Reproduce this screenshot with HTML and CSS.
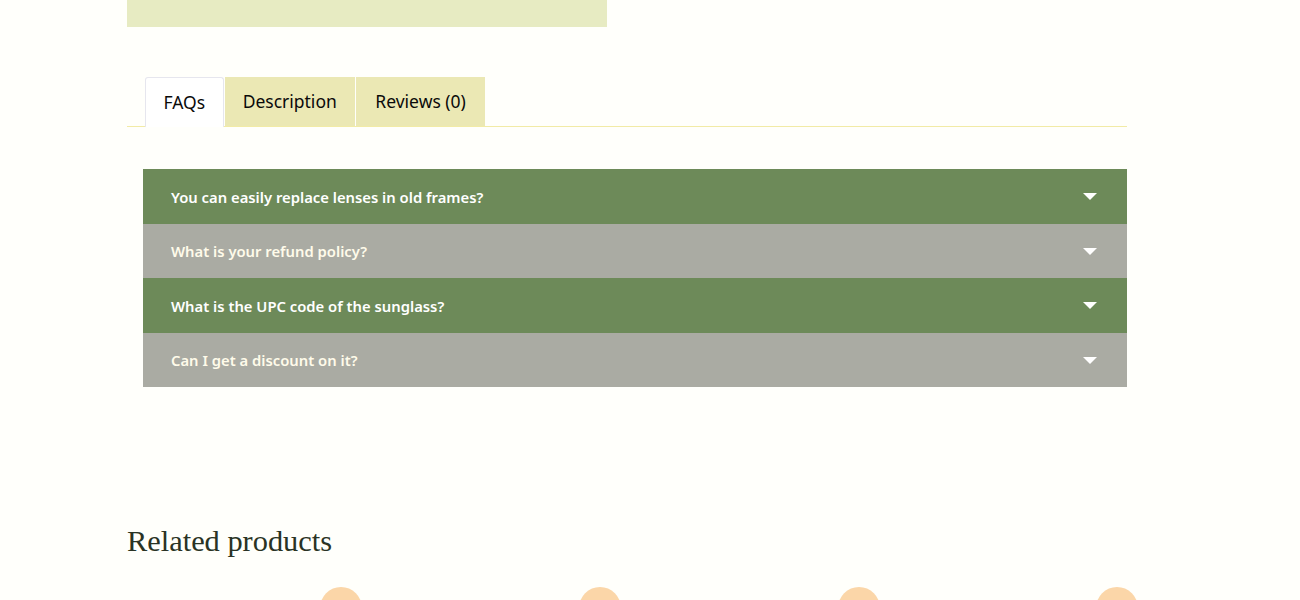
FILE: index.html
```html
<!DOCTYPE html>
<html>
<head>
<meta charset="utf-8">
<link rel="stylesheet" href="styles.css">
</head>
<body>
<div class="page">
  <div class="topbar"></div>
  <div class="tabs">
    <div class="tab active">FAQs</div>
    <div class="tab">Description</div>
    <div class="tab">Reviews (0)</div>
  </div>
  <div class="faq">
    <div class="item dark"><span>You can easily replace lenses in old frames?</span><i class="caret"></i></div>
    <div class="item light"><span>What is your refund policy?</span><i class="caret"></i></div>
    <div class="item dark"><span>What is the UPC code of the sunglass?</span><i class="caret"></i></div>
    <div class="item light"><span>Can I get a discount on it?</span><i class="caret"></i></div>
  </div>
  <h2 class="related">Related products</h2>
  <div class="products">
    <div class="prod"><div class="dot"></div></div>
    <div class="prod"><div class="dot"></div></div>
    <div class="prod"><div class="dot"></div></div>
    <div class="prod"><div class="dot"></div></div>
  </div>
</div>
</body>
</html>
```

FILE: styles.css
```css
html, body {
  margin: 0;
  padding: 0;
  background: #fffffb;
  overflow: hidden;
}
body {
  height: 600px;
}
.page {
  width: 1000px;
  margin: 0 0 0 127px;
  display: flex;
  flex-direction: column;
}
.topbar {
  width: 480px;
  height: 27px;
  background: #e7ebc2;
}
.tabs {
  margin-top: 50px;
  height: 49px;
  display: flex;
  padding-left: 18px;
  border-bottom: 1px solid #f2eba6;
}
.tab {
  font-family: "Noto Sans", sans-serif;
  font-size: 17.5px;
  color: #0a0a0a;
  height: 49px;
  line-height: 49px;
  padding: 0 18px;
  background: #ebe8b4;
  margin-right: 1px;
  box-sizing: border-box;
}
.tab.active {
  background: #ffffff;
  border: 1px solid #e6e6ee;
  border-bottom: none;
  border-radius: 3px 3px 0 0;
  height: 50px;
  margin-bottom: -1px;
  padding: 0 17.5px;
  line-height: 48px;
}
.tab:last-child {
  padding: 0 19.5px;
}
.faq {
  margin-top: 42px;
  margin-left: 16px;
  display: flex;
  flex-direction: column;
}
.item {
  height: 54.5px;
  display: flex;
  align-items: center;
  justify-content: space-between;
  padding: 0 30px 0 28px;
  font-family: "Noto Sans", sans-serif;
  font-weight: 600;
  font-size: 14.8px;
  color: #ffffff;
}
.item span {
  margin-top: 1px;
}
.item.dark {
  background: #6d8a59;
}
.item.light {
  background: #aaaba3;
  color: #fffbea;
}
.caret {
  width: 0;
  height: 0;
  margin-top: 1px;
  border-left: 7px solid transparent;
  border-right: 7px solid transparent;
  border-top: 7px solid #ffffff;
}
.related {
  margin: 136px 0 0 0;
  font-family: "Liberation Serif", serif;
  font-weight: 400;
  font-size: 30.4px;
  line-height: 36px;
  color: #2a3324;
}
.products {
  margin-top: 28px;
  display: grid;
  grid-template-columns: repeat(4, minmax(0, 1fr));
  column-gap: 35px;
}
.prod {
  display: flex;
}
.dot {
  flex: none;
  width: 42px;
  height: 42px;
  margin-left: 193px;
  border-radius: 50%;
  background: #fbd6a8;
}
```
